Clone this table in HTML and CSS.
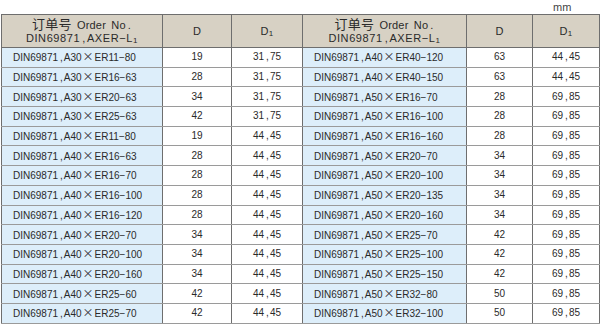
FILE: index.html
```html
<!DOCTYPE html>
<html>
<head>
<meta charset="utf-8">
<link rel="stylesheet" href="styles.css">
</head>
<body>
<div class="unit">mm</div>
<table class="spec">
  <colgroup>
    <col class="c-code"><col class="c-d"><col class="c-d1">
    <col class="c-code2"><col class="c-d2"><col class="c-d12">
  </colgroup>
  <thead>
    <tr>
      <th class="code-h"><span class="cn">订单号</span> Order No<span class="cm">.</span><br><span class="l2">DIN69871<span class="cm">,</span>AXER−L<sub>1</sub></span></th>
      <th>D</th>
      <th>D<sub>1</sub></th>
      <th class="code-h"><span class="cn">订单号</span> Order No<span class="cm">.</span><br><span class="l2">DIN69871<span class="cm">,</span>AXER−L<sub>1</sub></span></th>
      <th>D</th>
      <th>D<sub>1</sub></th>
    </tr>
  </thead>
  <tbody>
    <tr><td class="code">DIN69871<span class="cm">,</span>A30<span class="x">×</span>ER11−80</td><td>19</td><td>31<span class="cm">,</span>75</td><td class="code">DIN69871<span class="cm">,</span>A40<span class="x">×</span>ER40−120</td><td>63</td><td>44<span class="cm">,</span>45</td></tr>
    <tr><td class="code">DIN69871<span class="cm">,</span>A30<span class="x">×</span>ER16−63</td><td>28</td><td>31<span class="cm">,</span>75</td><td class="code">DIN69871<span class="cm">,</span>A40<span class="x">×</span>ER40−150</td><td>63</td><td>44<span class="cm">,</span>45</td></tr>
    <tr><td class="code">DIN69871<span class="cm">,</span>A30<span class="x">×</span>ER20−63</td><td>34</td><td>31<span class="cm">,</span>75</td><td class="code">DIN69871<span class="cm">,</span>A50<span class="x">×</span>ER16−70</td><td>28</td><td>69<span class="cm">,</span>85</td></tr>
    <tr><td class="code">DIN69871<span class="cm">,</span>A30<span class="x">×</span>ER25−63</td><td>42</td><td>31<span class="cm">,</span>75</td><td class="code">DIN69871<span class="cm">,</span>A50<span class="x">×</span>ER16−100</td><td>28</td><td>69<span class="cm">,</span>85</td></tr>
    <tr><td class="code">DIN69871<span class="cm">,</span>A40<span class="x">×</span>ER11−80</td><td>19</td><td>44<span class="cm">,</span>45</td><td class="code">DIN69871<span class="cm">,</span>A50<span class="x">×</span>ER16−160</td><td>28</td><td>69<span class="cm">,</span>85</td></tr>
    <tr><td class="code">DIN69871<span class="cm">,</span>A40<span class="x">×</span>ER16−63</td><td>28</td><td>44<span class="cm">,</span>45</td><td class="code">DIN69871<span class="cm">,</span>A50<span class="x">×</span>ER20−70</td><td>34</td><td>69<span class="cm">,</span>85</td></tr>
    <tr><td class="code">DIN69871<span class="cm">,</span>A40<span class="x">×</span>ER16−70</td><td>28</td><td>44<span class="cm">,</span>45</td><td class="code">DIN69871<span class="cm">,</span>A50<span class="x">×</span>ER20−100</td><td>34</td><td>69<span class="cm">,</span>85</td></tr>
    <tr><td class="code">DIN69871<span class="cm">,</span>A40<span class="x">×</span>ER16−100</td><td>28</td><td>44<span class="cm">,</span>45</td><td class="code">DIN69871<span class="cm">,</span>A50<span class="x">×</span>ER20−135</td><td>34</td><td>69<span class="cm">,</span>85</td></tr>
    <tr><td class="code">DIN69871<span class="cm">,</span>A40<span class="x">×</span>ER16−120</td><td>28</td><td>44<span class="cm">,</span>45</td><td class="code">DIN69871<span class="cm">,</span>A50<span class="x">×</span>ER20−160</td><td>34</td><td>69<span class="cm">,</span>85</td></tr>
    <tr><td class="code">DIN69871<span class="cm">,</span>A40<span class="x">×</span>ER20−70</td><td>34</td><td>44<span class="cm">,</span>45</td><td class="code">DIN69871<span class="cm">,</span>A50<span class="x">×</span>ER25−70</td><td>42</td><td>69<span class="cm">,</span>85</td></tr>
    <tr><td class="code">DIN69871<span class="cm">,</span>A40<span class="x">×</span>ER20−100</td><td>34</td><td>44<span class="cm">,</span>45</td><td class="code">DIN69871<span class="cm">,</span>A50<span class="x">×</span>ER25−100</td><td>42</td><td>69<span class="cm">,</span>85</td></tr>
    <tr><td class="code">DIN69871<span class="cm">,</span>A40<span class="x">×</span>ER20−160</td><td>34</td><td>44<span class="cm">,</span>45</td><td class="code">DIN69871<span class="cm">,</span>A50<span class="x">×</span>ER25−150</td><td>42</td><td>69<span class="cm">,</span>85</td></tr>
    <tr><td class="code">DIN69871<span class="cm">,</span>A40<span class="x">×</span>ER25−60</td><td>42</td><td>44<span class="cm">,</span>45</td><td class="code">DIN69871<span class="cm">,</span>A50<span class="x">×</span>ER32−80</td><td>50</td><td>69<span class="cm">,</span>85</td></tr>
    <tr><td class="code">DIN69871<span class="cm">,</span>A40<span class="x">×</span>ER25−70</td><td>42</td><td>44<span class="cm">,</span>45</td><td class="code">DIN69871<span class="cm">,</span>A50<span class="x">×</span>ER32−100</td><td>50</td><td>69<span class="cm">,</span>85</td></tr>
  </tbody>
</table>
</body>
</html>
```
FILE: styles.css
```css
html, body {
  margin: 0;
  padding: 0;
  background: #ffffff;
}
body {
  font-family: "Liberation Sans", "Noto Sans CJK SC", sans-serif;
  color: #2a2a2a;
  font-size: 10px;
}
.unit {
  height: 14px;
  line-height: 14px;
  padding-left: 553px;
  font-size: 11px;
  color: #444444;
}
.spec {
  margin-left: 1px;
  border-collapse: collapse;
  table-layout: fixed;
  width: 598px;
}
.c-code { width: 161px; }
.c-d { width: 69px; }
.c-d1 { width: 71px; }
.c-code2 { width: 164px; }
.c-d2 { width: 66px; }
.c-d12 { width: 67px; }
.spec th, .spec td {
  border: 1px solid #6e6e6e;
  padding: 0;
  text-align: center;
  font-weight: normal;
  white-space: nowrap;
  overflow: hidden;
}
.spec thead tr {
  height: 33px;
}
.spec th {
  background: #d7d1c4;
  font-size: 11px;
  line-height: 13px;
  color: #2a2a2a;
  letter-spacing: 0.2px;
}
.spec th.code-h {
  word-spacing: 2px;
}
.l2 {
  letter-spacing: 0.6px;
}
.spec th sub, .spec td sub {
  font-size: 8px;
  line-height: 0;
  vertical-align: -1px;
}
.cn {
  font-family: "Noto Sans CJK SC", sans-serif;
  font-size: 13px;
  line-height: 13px;
}
.cm {
  padding: 0 1px 0 2px;
}
.x {
  font-family: "Noto Sans CJK SC", sans-serif;
  font-size: 11px;
  line-height: 12px;
  padding: 0 1px;
}
.spec tbody tr {
  height: 19.7px;
}
.spec td {
  border-top-color: #9a9a9a;
  border-bottom-color: #9a9a9a;
  font-size: 10px;
  line-height: 12px;
}
.spec td.code {
  background: #ddeefa;
  text-align: left;
  padding-left: 11px;
}
```
